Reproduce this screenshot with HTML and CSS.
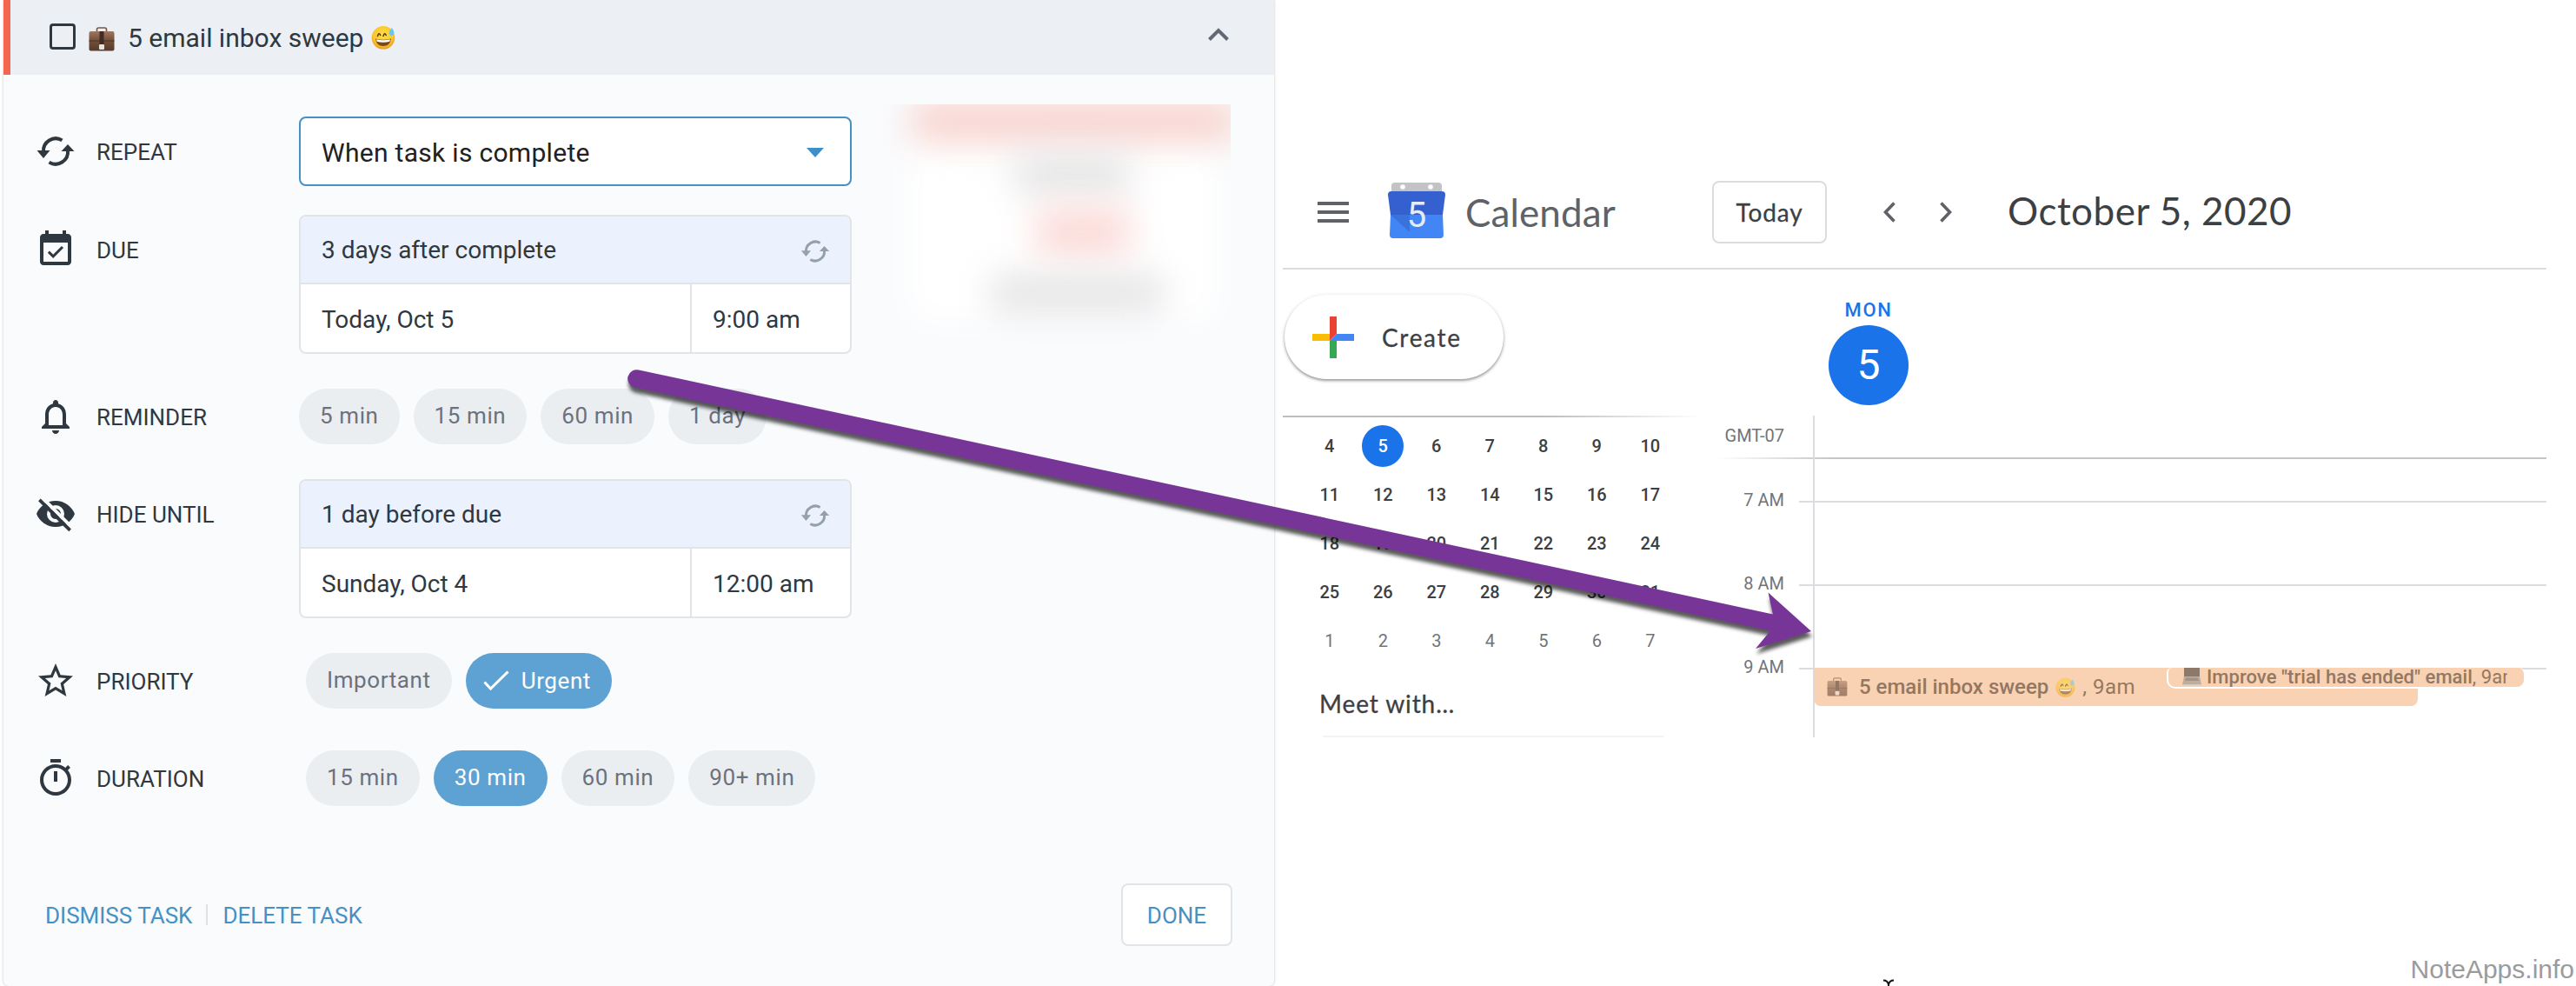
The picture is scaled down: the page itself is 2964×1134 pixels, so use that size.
FILE: index.html
```html
<!DOCTYPE html>
<html lang="en">
<head>
    <meta charset="UTF-8">
    <meta name="viewport" content="width=device-width, initial-scale=1.0">
    <title>5 email inbox sweep</title>
    <link rel="stylesheet" href="styles.css">
</head>
<body>
    <!-- shared icons -->
    <svg class="defs" width="0" height="0">
        <defs>
            <linearGradient id="leather" x1="0" y1="0" x2="0" y2="1">
                <stop offset="0" stop-color="#a07860"/>
                <stop offset="0.45" stop-color="#74503d"/>
                <stop offset="1" stop-color="#593a2d"/>
            </linearGradient>
            <radialGradient id="face" cx="0.5" cy="0.4" r="0.6">
                <stop offset="0" stop-color="#ffe24a"/>
                <stop offset="0.7" stop-color="#fcc62c"/>
                <stop offset="1" stop-color="#e99a1c"/>
            </radialGradient>
        </defs>
        <symbol id="sync" viewBox="-24 -24 48 48">
            <path d="M7.5 -12.6A14.2 14.2 0 0 0 -14 1M-7.5 12.6A14.2 14.2 0 0 0 14 -1" fill="none" stroke="currentColor" stroke-width="4"/>
            <path d="M-21.5 -1h15l-7.5 9zM21.5 0h-15l7.5 -8z" fill="currentColor"/>
        </symbol>
        <symbol id="briefcase" viewBox="0 0 30 28">
            <path d="M9.5 6V3q0-2 2-2h7q2 0 2 2v3" fill="none" stroke="#765747" stroke-width="1.6"/>
            <rect x="0.5" y="5" width="29" height="22.5" rx="2" fill="url(#leather)"/>
            <path d="M0.5 16h29" stroke="#4d3024" stroke-width="1"/>
            <rect x="12.5" y="5" width="5" height="16" fill="#432b22"/>
            <rect x="12" y="20" width="6" height="6" rx="1" fill="#e8e2dc"/>
        </symbol>
        <symbol id="sweat" viewBox="0 0 28 28">
            <circle cx="14" cy="14.3" r="13.3" fill="url(#face)"/>
            <path d="M7.5 12.5q1.5-5 3.2-1M14 12.5q1.5-5 3.2-1" fill="none" stroke="#5a3a10" stroke-width="1.6" stroke-linecap="round"/>
            <path d="M5 15.5q9 2.6 18 0q-1 8.5-9 8.5t-9-8.5z" fill="#7a4a16"/>
            <path d="M6 16.2q8 2.2 16 0l-.6 2.6q-7.4 1.8-14.8 0z" fill="#fff"/>
            <path d="M24 3q-4 4.500-3 7.200q1 2.300 3.300 1.500q2.500-1 2-3.700q-.4-2-2.300-5z" fill="#6cc5ee"/>
        </symbol>
        <symbol id="laptop" viewBox="0 0 22 22">
            <rect x="2" y="0" width="18" height="11" fill="#33302e"/>
            <path d="M2 11h18l2 9H0z" fill="#8d9092"/>
            <path d="M4 12.500h14l1 3.500H3z" fill="#5d5f61"/>
            <path d="M0 20h22v1.500H0z" fill="#c3c5c6"/>
        </symbol>
    </svg>

    <div class="page">
        <section class="task">
            <header class="task-header">
                <span class="checkbox"></span>
                <svg class="case"><use href="#briefcase"/></svg>
                <h1>5 email inbox sweep</h1>
                <svg class="smile"><use href="#sweat"/></svg>
                <svg class="collapse" viewBox="0 0 26 16"><path d="M2.500 13.500L13 3l10.500 10.500" fill="none" stroke="#606974" stroke-width="4"/></svg>
            </header>

            <div class="task-body">
                <div class="rows">
                    <div class="row">
                        <div class="label">
                            <svg><use href="#sync"/></svg>
                            <span>REPEAT</span>
                        </div>
                        <div class="select">When task is complete <i class="caret"></i></div>
                    </div>
                    <div class="row">
                        <div class="label">
                            <svg viewBox="0 0 24 24"><path d="M16.530 11.060L15.470 10l-4.880 4.880-2.120-2.120-1.060 1.060L10.590 17l5.940-5.940zM19 3h-1V1h-2v2H8V1H6v2H5c-1.110 0-1.990.9-1.990 2L3 19c0 1.100.89 2 2 2h14c1.100 0 2-.9 2-2V5c0-1.100-.9-2-2-2zm0 16H5V8h14v11z"/></svg>
                            <span>DUE</span>
                        </div>
                        <div class="datebox">
                            <div class="rule">3 days after complete <svg><use href="#sync"/></svg></div>
                            <div class="when"><span class="date">Today, Oct 5</span><span class="time">9:00 am</span></div>
                        </div>
                    </div>
                    <div class="row chips-row">
                        <div class="label">
                            <svg viewBox="0 0 24 24"><path d="M12 22c1.100 0 2-.9 2-2h-4c0 1.100.9 2 2 2zm6-6v-5c0-3.070-1.630-5.640-4.500-6.320V4c0-.83-.67-1.500-1.500-1.500s-1.500.67-1.500 1.500v.68C7.640 5.360 6 7.920 6 11v5l-2 2v1h16v-1l-2-2zm-2 1H8v-6c0-2.480 1.510-4.500 4-4.500s4 2.020 4 4.500v6z"/></svg>
                            <span>REMINDER</span>
                        </div>
                        <div class="chips">
                            <span class="chip">5 min</span>
                            <span class="chip">15 min</span>
                            <span class="chip">60 min</span>
                            <span class="chip">1 day</span>
                        </div>
                    </div>
                    <div class="row">
                        <div class="label">
                            <svg viewBox="0 0 24 24">
                                <path d="M12 4.500C7 4.500 2.730 7.610 1 12c1.730 4.390 6 7.500 11 7.500s9.270-3.110 11-7.500c-1.730-4.390-6-7.500-11-7.500zM12 17a5 5 0 1 1 0-10 5 5 0 0 1 0 10zm0-8a3 3 0 1 0 0 6 3 3 0 0 0 0-6z"/>
                                <path d="M4.300 2.700L21.800 20.200" stroke="#fafbfd" stroke-width="2"/>
                                <path d="M2.700 3.900L20.300 21.400" stroke="#2f3840" stroke-width="1.900"/>
                            </svg>
                            <span>HIDE UNTIL</span>
                        </div>
                        <div class="datebox">
                            <div class="rule">1 day before due <svg><use href="#sync"/></svg></div>
                            <div class="when"><span class="date">Sunday, Oct 4</span><span class="time">12:00 am</span></div>
                        </div>
                    </div>
                    <div class="row chips-row">
                        <div class="label">
                            <svg viewBox="0 0 24 24"><path d="M22 9.240l-7.190-.62L12 2 9.190 8.630 2 9.240l5.460 4.730L5.820 21 12 17.270 18.180 21l-1.630-7.030L22 9.240zM12 15.400l-3.760 2.270 1-4.280-3.320-2.880 4.380-.38L12 6.100l1.710 4.040 4.380.38-3.320 2.880 1 4.280L12 15.400z"/></svg>
                            <span>PRIORITY</span>
                        </div>
                        <div class="chips inset">
                            <span class="chip">Important</span>
                            <span class="chip active checked"><svg viewBox="0 0 30 24"><path d="M1.500 13.500l7 7.500L28.500 1.500" fill="none" stroke="#fff" stroke-width="3"/></svg>Urgent</span>
                        </div>
                    </div>
                    <div class="row chips-row last">
                        <div class="label">
                            <svg viewBox="0 0 24 24"><path d="M15 1H9v2h6V1zm-4 13h2V8h-2v6zm8.030-6.610l1.420-1.420c-.43-.51-.9-.99-1.410-1.410l-1.420 1.420C16.070 4.740 14.120 4 12 4c-4.970 0-9 4.030-9 9s4.020 9 9 9 9-4.030 9-9c0-2.120-.74-4.070-1.970-5.610zM12 20c-3.870 0-7-3.130-7-7s3.130-7 7-7 7 3.130 7 7-3.130 7-7 7z"/></svg>
                            <span>DURATION</span>
                        </div>
                        <div class="chips inset">
                            <span class="chip">15 min</span>
                            <span class="chip active">30 min</span>
                            <span class="chip">60 min</span>
                            <span class="chip">90+ min</span>
                        </div>
                    </div>
                </div>
                <div class="preview">
                    <i class="white"></i>
                    <i class="bar"></i>
                    <i class="grey"></i>
                    <i class="red"></i>
                    <i class="grey wide"></i>
                </div>
            </div>

            <footer class="task-footer">
                <a>DISMISS TASK</a>
                <i class="sep"></i>
                <a>DELETE TASK</a>
                <button class="done">DONE</button>
            </footer>
        </section>

        <section class="calendar">
            <header class="topbar">
                <div class="menu"><i></i><i></i><i></i></div>
                <svg class="logo" viewBox="0 0 66 64">
                    <path d="M4 12V4q0-4 4-4h50q4 0 4 4v8z" fill="#c3c2c5"/>
                    <circle cx="17" cy="5" r="2.800" fill="#fff"/>
                    <circle cx="49" cy="5" r="2.800" fill="#fff"/>
                    <path d="M4 10h58q4 0 4 4l-3 23H3L0 14q0-4 4-4z" fill="#3560cf"/>
                    <path d="M3 37h60l1 23q0 4-4 4H6q-4 0-4-4z" fill="#4285f4"/>
                    <path d="M3 37h22v20z" fill="#3a72dc"/>
                    <text x="33" y="51" text-anchor="middle">5</text>
                </svg>
                <span class="brand">Calendar</span>
                <button class="today">Today</button>
                <svg class="arrow prev" viewBox="0 0 14 24"><path d="M12.500 1.500L2.500 12l10 10.500" fill="none" stroke="#5f6368" stroke-width="3.600"/></svg>
                <svg class="arrow" viewBox="0 0 14 24"><path d="M1.500 1.500L11.500 12l-10 10.500" fill="none" stroke="#5f6368" stroke-width="3.600"/></svg>
                <span class="current">October 5, 2020</span>
            </header>

            <div class="cal-body">
                <aside class="sidebar">
                    <button class="create">
                        <svg viewBox="0 0 48 48">
                            <path d="M20 0h8v20l-8 8z" fill="#ea4335"/>
                            <path d="M28 20h20v8H20z" fill="#4285f4"/>
                            <path d="M20 28h8v20h-8z" fill="#34a853"/>
                            <path d="M0 20h20v8H0z" fill="#fbbc04"/>
                        </svg>
                        Create
                    </button>
                    <div class="mini">
                        <span>4</span><span class="on">5</span><span>6</span><span>7</span><span>8</span><span>9</span><span>10</span>
                        <span>11</span><span>12</span><span>13</span><span>14</span><span>15</span><span>16</span><span>17</span>
                        <span>18</span><span>19</span><span>20</span><span>21</span><span>22</span><span>23</span><span>24</span>
                        <span>25</span><span>26</span><span>27</span><span>28</span><span>29</span><span>30</span><span>31</span>
                        <span class="next">1</span><span class="next">2</span><span class="next">3</span><span class="next">4</span><span class="next">5</span><span class="next">6</span><span class="next">7</span>
                    </div>
                    <div class="meet">Meet with…</div>
                </aside>

                <div class="day">
                    <div class="day-head">
                        <span class="dow">MON</span>
                        <span class="num">5</span>
                    </div>
                    <div class="timeline">
                        <div class="zone">GMT-07</div>
                        <div class="hour"><span>7 AM</span></div>
                        <div class="hour"><span>8 AM</span></div>
                        <div class="hour"><span>9 AM</span></div>
                        <div class="event first">
                            <svg><use href="#briefcase"/></svg>
                            <b>5 email inbox sweep</b>
                            <svg class="face"><use href="#sweat"/></svg>
                            <span>, 9am</span>
                        </div>
                        <div class="event second">
                            <svg><use href="#laptop"/></svg>
                            <div class="clip"><b>Improve "trial has ended" email</b>, 9am</div>
                        </div>
                    </div>
                </div>
            </div>
        </section>

        <!-- arrow from the due date to the calendar slot -->
        <svg class="pointer" viewBox="0 0 1400 360">
            <path d="M35 25.500L1340 306.500L1334.500 281.500L1384 326L1320 346L1337 325.500L30 45.500A10.200 10.200 0 0 1 35 25.500z" fill="#773697"/>
        </svg>
        <svg class="cursor" viewBox="0 0 14 8"><path d="M1 1.500q5 0 6 5q1-5 6-5M7 4v4" fill="none" stroke="#111" stroke-width="2"/></svg>
        <div class="watermark">NoteApps.info</div>
    </div>
</body>
</html>
```
FILE: styles.css
```css
* {
    box-sizing: border-box;
}

body {
    margin: 0;
    font-family: Roboto, "Liberation Sans", sans-serif;
    background: #fff;
    color: #2f3840;
}

.defs {
    position: absolute;
}

button {
    font: inherit;
    color: inherit;
    margin: 0;
    padding: 0;
}

svg {
    flex: none;
    display: block;
}

.page {
    position: relative;
    display: flex;
    gap: 10px;
    height: 1134px;
    padding-left: 4px;
    overflow: hidden;
}

/* Task card */
.task {
    width: 1462px;
    background: #fafbfd;
    border-radius: 0 0 6px 6px;
    box-shadow: 0 0 3px rgba(0, 0, 0, 0.25);
    flex: none;
}

.task-header {
    display: flex;
    align-items: center;
    height: 86px;
    padding: 0 51px 2px 45px;
    background: #eceff4;
    border-left: 8px solid #f46650;
}

.checkbox {
    width: 30px;
    height: 30px;
    border: 3px solid #2f3840;
    border-radius: 4px;
}

.case {
    width: 30px;
    height: 28px;
    margin: 5px 15px 0;
}

.task-header h1 {
    margin: 2px 0 0;
    font-size: 30px;
    font-weight: 400;
}

.smile {
    width: 28px;
    height: 28px;
    margin: 2px 0 0 9px;
}

.collapse {
    width: 26px;
    height: 16px;
    margin: -4px 0 0 auto;
}

.task-body {
    display: flex;
    height: 930px;
    padding-top: 34px;
}

.rows {
    width: 976px;
    margin-right: 20px;
    padding: 14px 0 0 36px;
}

.row {
    display: flex;
    margin-bottom: 40px;
}

.row:first-child {
    margin-bottom: 33px;
}

.chips-row + .last {
    margin-top: 48px;
}

.chips-row {
    height: 64px;
}

.label {
    display: flex;
    align-items: center;
    width: 304px;
    height: 80px;
    gap: 23px;
    font-size: 26px;
}

.label span {
    padding-top: 2px;
}

.label svg {
    width: 48px;
    height: 48px;
    fill: #2f3840;
}

.chips-row .label {
    height: 64px;
}

.select {
    display: flex;
    align-items: center;
    justify-content: space-between;
    width: 636px;
    height: 80px;
    padding: 2px 30px 0 24px;
    background: #fff;
    border: 2px solid #4591c5;
    border-radius: 8px;
    color: #212121;
    font-size: 30px;
    letter-spacing: 0.3px;
}

.caret {
    border: 10px solid transparent;
    border-top: 11px solid #3d8fc9;
    border-bottom: 0;
}

.datebox {
    width: 636px;
    height: 160px;
    background: #fff;
    border: 2px solid #e1e4e8;
    border-radius: 8px;
    overflow: hidden;
    font-size: 28px;
}

.rule {
    display: flex;
    align-items: center;
    justify-content: space-between;
    height: 78px;
    padding: 0 22px 0 24px;
    background: #ebf2fe;
    border-bottom: 2px solid #e1e4e8;
}

.rule svg {
    width: 36px;
    height: 36px;
    margin-top: 4px;
    color: #94a1ad;
}

.when {
    display: flex;
    height: 78px;
    line-height: 82px;
}

.date {
    width: 450px;
    padding-left: 24px;
    border-right: 2px solid #e1e4e8;
}

.time {
    padding-left: 24px;
}

.chips {
    display: flex;
    gap: 16px;
}

.chips.inset {
    padding-left: 8px;
}

.chip {
    height: 64px;
    padding: 0 24px;
    line-height: 62px;
    border-radius: 32px;
    background: #ebeef1;
    color: #6b727d;
    font-size: 26px;
    letter-spacing: 0.6px;
}

.chip.active {
    background: #5ea2d4;
    color: #fff;
}

.chip.checked {
    display: flex;
    align-items: center;
    gap: 14px;
    padding-left: 20px;
}

.chip svg {
    width: 30px;
    height: 24px;
}

/* Blurred out preview */
.preview {
    position: relative;
    width: 416px;
    height: 280px;
    overflow: hidden;
}

.preview i {
    position: absolute;
    filter: blur(20px);
}

.preview .white {
    inset: 40px 15px 30px 45px;
    background: #fff;
}

.preview .bar {
    left: 50px;
    top: -4px;
    width: 372px;
    height: 46px;
    background: #f8d2cc;
}

.preview .grey {
    left: 168px;
    top: 60px;
    width: 130px;
    height: 40px;
    background: #e2e2e3;
}

.preview .red {
    left: 192px;
    top: 118px;
    width: 108px;
    height: 56px;
    background: #fbdbd8;
}

.preview .wide {
    left: 140px;
    top: 198px;
    width: 198px;
}

.task-footer {
    display: flex;
    align-items: center;
    height: 72px;
    padding: 0 48px;
    color: #4591c5;
    font-size: 26px;
}

.task-footer a {
    padding-top: 2px;
}

.sep {
    width: 2px;
    height: 24px;
    margin: 0 17px 0 16px;
    background: #dfe3e7;
}

.done {
    width: 128px;
    height: 72px;
    margin-left: auto;
    padding-top: 2px;
    background: #fff;
    border: 2px solid #e1e4e8;
    border-radius: 8px;
}

/* Calendar */
.calendar {
    width: 1454px;
    padding-top: 180px;
    color: #3c4043;
}

.topbar {
    display: flex;
    align-items: center;
    height: 130px;
    padding-left: 40px;
    border-bottom: 2px solid #dadce0;
    font-family: Lato, Roboto, sans-serif;
}

.menu {
    display: grid;
    gap: 6px;
    width: 36px;
}

.menu i {
    height: 4px;
    background: #5f6368;
}

.logo {
    width: 66px;
    height: 64px;
    margin: -4px 23px 0 45px;
}

.logo text {
    font: 400 40px Roboto, sans-serif;
    fill: #e4ecfb;
}

.brand {
    width: 284px;
    margin-top: -1px;
    color: #5f6368;
    font-size: 44px;
    letter-spacing: 0.1px;
}

.today {
    width: 132px;
    height: 72px;
    background: #fff;
    border: 2px solid #dadce0;
    border-radius: 8px;
    font-size: 28px;
    letter-spacing: 0.9px;
    -webkit-text-stroke: 0.3px;
}

.arrow {
    width: 14px;
    height: 24px;
}

.arrow.prev {
    margin: 0 51px 0 65px;
}

.current {
    margin: -4px 0 0 64px;
    font-size: 44px;
    letter-spacing: 0.5px;
}

.cal-body {
    display: flex;
}

.sidebar {
    width: 500px;
    padding-top: 29px;
}

.create {
    display: flex;
    align-items: center;
    gap: 32px;
    width: 252px;
    height: 97px;
    margin-left: 2px;
    padding-left: 32px;
    background: #fff;
    border: 0;
    border-radius: 49px;
    box-shadow: 0 2px 3px rgba(60, 64, 67, 0.45), 0 1px 5px rgba(60, 64, 67, 0.15);
    font-family: Lato, Roboto, sans-serif;
    font-size: 28px;
    letter-spacing: 1.7px;
    -webkit-text-stroke: 0.3px;
}

.create svg {
    width: 48px;
    height: 48px;
}

.mini {
    display: grid;
    grid-template-columns: repeat(7, 61.5px);
    grid-auto-rows: 56px;
    align-items: center;
    justify-items: center;
    margin-top: 42px;
    padding: 5px 0 0 23px;
    border-top: 2px solid;
    border-image: linear-gradient(90deg, #bdbdbf 60%, #fff 96%) 1;
    font-size: 20px;
    font-weight: 500;
}

.mini .on {
    width: 48px;
    line-height: 48px;
    border-radius: 50%;
    background: #1a73e8;
    color: #fff;
    text-align: center;
}

.mini .next {
    color: #70757a;
    font-weight: 400;
}

.meet {
    width: 392px;
    height: 83px;
    margin-left: 46px;
    line-height: 88px;
    border-bottom: 2px solid #f1f3f4;
    font-family: Lato, Roboto, sans-serif;
    font-size: 28px;
    letter-spacing: 0.9px;
    text-indent: -4px;
    -webkit-text-stroke: 0.3px;
}

.day {
    flex: 1;
}

.day-head {
    display: flex;
    flex-direction: column;
    align-items: center;
    width: 348px;
    height: 168px;
    padding-top: 33px;
    color: #1a73e8;
}

.dow {
    height: 31px;
    line-height: 28px;
    font-size: 22px;
    font-weight: 500;
    letter-spacing: 1.6px;
}

.num {
    width: 92px;
    line-height: 92px;
    height: 92px;
    border-radius: 50%;
    background: #1a73e8;
    color: #fff;
    font-size: 48px;
    text-align: center;
}

.timeline {
    position: relative;
    height: 370px;
    font-size: 20px;
    color: #70757a;
}

.timeline::before {
    content: "";
    position: absolute;
    left: 110px;
    top: 0;
    width: 2px;
    height: 370px;
    background: #dadce0;
}

.zone {
    height: 50px;
    padding-right: 877px;
    line-height: 46px;
    text-align: right;
    border-bottom: 2px solid;
    border-image: linear-gradient(90deg, #fff, #c4c5c7 14%) 1;
}

.hour {
    display: flex;
    align-items: center;
    height: 96px;
}

.hour span {
    width: 77px;
    margin: -4px 17px 0 0;
    text-align: right;
}

.hour::after {
    content: "";
    flex: 1;
    height: 2px;
    background: #dadce0;
}

.hour:nth-child(2) {
    margin-top: 1px;
}

.event {
    position: absolute;
    display: flex;
    align-items: center;
    background: #f8d2b2;
    color: #947762;
    white-space: nowrap;
}

.event b {
    font-weight: 500;
}

.event svg {
    opacity: 0.55;
}

.first {
    left: 111px;
    top: 290px;
    width: 695px;
    height: 44px;
    padding: 0 0 0 15px;
    border-radius: 0 0 8px 8px;
    font-size: 24px;
}

.first svg {
    width: 24px;
    height: 22px;
    margin-right: 13px;
}

.first svg.face {
    width: 23px;
    height: 23px;
    margin: 0 8px;
}

.first span {
    letter-spacing: 0.5px;
}

.second {
    left: 517px;
    top: 290px;
    width: 413px;
    height: 24px;
    padding: 0 0 2px 16px;
    border: 2px solid #fff;
    border-top: 0;
    border-radius: 6px 8px 10px 10px;
    overflow: hidden;
    font-size: 22px;
}

.second svg {
    width: 22px;
    height: 22px;
    margin: 0 6px 0 0;
}

.clip {
    width: 346px;
    overflow: hidden;
    letter-spacing: 0.05px;
}

/* Annotations */
.pointer {
    position: absolute;
    left: 700px;
    top: 400px;
    width: 1400px;
    height: 360px;
    filter: drop-shadow(1px 6px 2px rgba(0, 0, 0, 0.65));
}

.cursor {
    position: absolute;
    left: 2166px;
    top: 1126px;
    width: 14px;
    height: 8px;
}

.watermark {
    position: absolute;
    right: 2px;
    bottom: 2px;
    color: #9b9b9b;
    font-family: "Liberation Sans", Arial, sans-serif;
    font-size: 30px;
}
```
